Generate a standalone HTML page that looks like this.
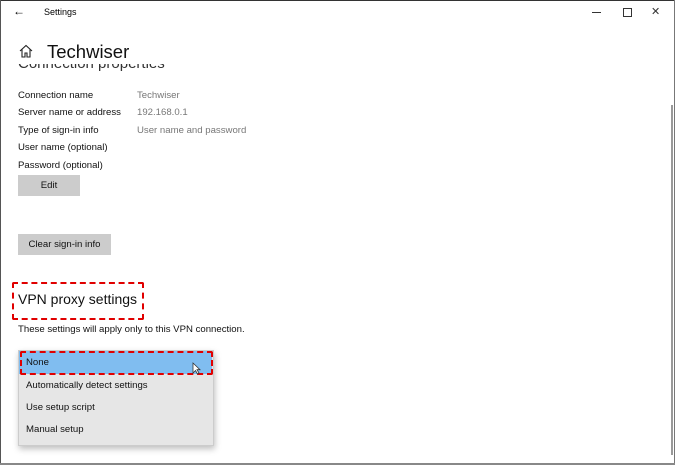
<!DOCTYPE html>
<html><head><style>
body{margin:0;width:675px;height:465px;overflow:hidden;background:#fff;font-family:"Liberation Sans",sans-serif;position:relative;color:#000}
.a{position:absolute;white-space:nowrap}
.lbl{font-size:9.6px;color:#111}
.val{font-size:9.6px;color:#777}
.btn{position:absolute;background:#ccc;font-size:9.6px;text-align:center;color:#111}
</style></head><body>
<div class="a" style="left:18px;top:64px;width:200px;height:10px;overflow:hidden"><div class="a" style="left:0;top:-9px;font-size:15px;color:#333">Connection properties</div></div>
<div class="a" style="left:1px;top:30px;width:600px;height:34px;background:#fff"></div>
<div class="a" style="left:0;top:0;width:675px;height:1px;background:#333"></div>
<div class="a" style="left:0;top:0;width:1px;height:465px;background:#555"></div>
<div class="a" style="left:674px;top:0;width:1px;height:465px;background:#777"></div>
<div class="a" style="left:0;top:463px;width:675px;height:2px;background:#888"></div>
<div class="a" style="left:671px;top:105px;width:2px;height:350px;background:#999"></div>
<div class="a" style="left:13px;top:4px;font-size:12px">&#8592;</div>
<div class="a" style="left:44px;top:7px;font-size:9px">Settings</div>
<div class="a" style="left:592px;top:12px;width:9px;height:1px;background:#333"></div>
<div class="a" style="left:623px;top:8px;width:7px;height:7px;border:1px solid #333"></div>
<div class="a" style="left:651px;top:5px;font-size:11px;color:#333">&#10005;</div>
<svg class="a" style="left:19px;top:44px" width="14" height="14" viewBox="0 0 14 14"><path d="M1 7L7 1.5 13 7M3 5.5V13h3V9h2v4h3V5.5" fill="none" stroke="#222" stroke-width="1.1"/></svg>
<div class="a" style="left:47px;top:41px;font-size:18.5px;color:#111">Techwiser</div>
<div class="a lbl" style="left:18px;top:90px">Connection name</div><div class="a val" style="left:137px;top:90px">Techwiser</div>
<div class="a lbl" style="left:18px;top:107px">Server name or address</div><div class="a val" style="left:137px;top:107px">192.168.0.1</div>
<div class="a lbl" style="left:18px;top:125px">Type of sign-in info</div><div class="a val" style="left:137px;top:125px">User name and password</div>
<div class="a lbl" style="left:18px;top:142px">User name (optional)</div>
<div class="a lbl" style="left:18px;top:160px">Password (optional)</div>
<div class="btn" style="left:18px;top:175px;width:62px;height:21px;line-height:21px">Edit</div>
<div class="btn" style="left:18px;top:234px;width:93px;height:21px;line-height:21px">Clear sign-in info</div>
<div class="a" style="left:12px;top:282px;width:128px;height:34px;border:2px dashed #e00000;border-radius:2px"></div>
<div class="a" style="left:18px;top:291px;font-size:14px;color:#111">VPN proxy settings</div>
<div class="a lbl" style="left:18px;top:324px">These settings will apply only to this VPN connection.</div>
<div class="a" style="left:18px;top:350px;width:194px;height:94px;background:#e6e6e6;border:1px solid #ccc;box-shadow:1px 3px 6px rgba(0,0,0,.25)"></div>
<div class="a" style="left:19px;top:351px;width:193px;height:23px;background:#80bdf0"></div>
<div class="a" style="left:20px;top:351px;width:189px;height:20px;border:2px dashed #e00000;border-radius:2px"></div>
<div class="a lbl" style="left:26px;top:357px">None</div>
<svg class="a" style="left:192px;top:362px" width="9" height="13" viewBox="0 0 9 13"><path d="M1 1v10l2.5-2.5 2 3.5 1.5-1-2-3.3H8z" fill="#fff" stroke="#333" stroke-width=".8"/></svg>
<div class="a lbl" style="left:26px;top:380px">Automatically detect settings</div>
<div class="a lbl" style="left:26px;top:402px">Use setup script</div>
<div class="a lbl" style="left:26px;top:424px">Manual setup</div>
</body></html>
